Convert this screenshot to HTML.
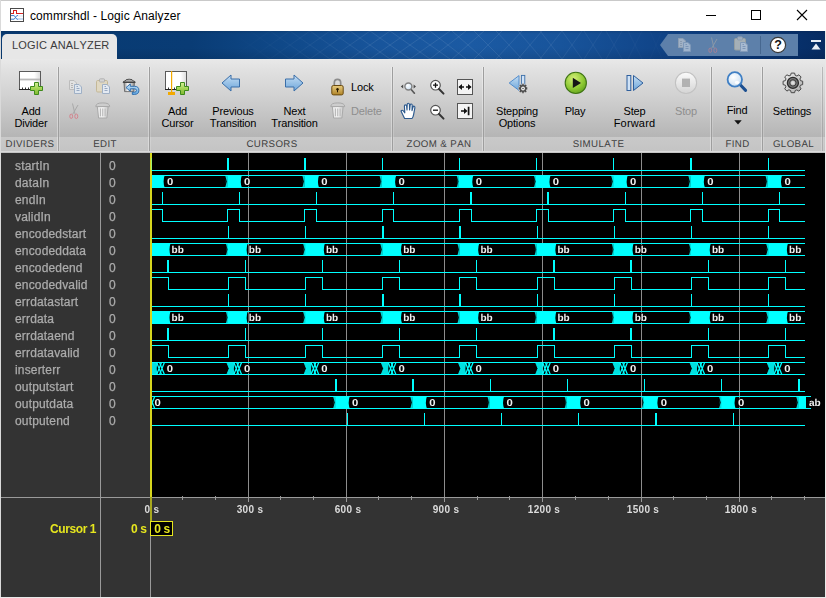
<!DOCTYPE html>
<html lang="en">
<head>
<meta charset="utf-8">
<title>commrshdl - Logic Analyzer</title>
<style>
html,body{margin:0;padding:0;}
body{width:826px;height:598px;overflow:hidden;background:#fff;position:relative;
  font-family:"Liberation Sans",sans-serif;font-size:11px;color:#000;font-kerning:none;}
.abs{position:absolute;}
#win{position:absolute;left:0;top:0;width:826px;height:598px;overflow:hidden;background:#fff;}
/* title bar */
#title{position:absolute;left:0;top:0;width:826px;height:31px;background:#fff;border-top:1px solid #c9c9c9;box-sizing:border-box;}
#title .txt{position:absolute;left:30px;top:7px;font-size:12px;line-height:16px;color:#000;white-space:nowrap;letter-spacing:0.1px;}
/* tab strip */
#strip{position:absolute;left:1px;top:31px;width:824px;height:28px;
  background:linear-gradient(to bottom,rgba(0,0,0,0.12) 0,rgba(0,0,0,0) 3px,rgba(0,0,0,0) 60%,rgba(0,0,0,0.10) 100%),linear-gradient(to right,#083a72 0px,#093c75 190px,#0f4888 280px,#18559c 380px,#1b5aa3 470px,#18549b 560px,#104488 660px,#0a387a 740px,#062c63 824px);}
#tab{position:absolute;left:2px;top:34px;width:115px;height:26px;background:#e7e7e7;border-radius:5px 5px 0 0;}
#tab span{position:absolute;left:10px;top:4px;font-size:11px;line-height:14px;color:#3b3b3b;white-space:nowrap;letter-spacing:0.15px;}
#qab{position:absolute;left:660px;top:34px;width:138px;height:22px;}
/* toolbar */
#tool{position:absolute;left:1px;top:59px;width:824px;height:93px;
  background:linear-gradient(to bottom,#e9e9e9 0px,#e0e0e0 12px,#d2d2d2 36px,#c0c0c0 62px,#b5b5b5 78px);}
#toolband{position:absolute;left:1px;top:137px;width:824px;height:14px;background:linear-gradient(to bottom,#c9c9c9,#c4c4c4);}
#toolbot{position:absolute;left:1px;top:151px;width:824px;height:2px;background:#c4c4c4;border-top:1px solid #dadada;box-sizing:border-box;}
.sep{position:absolute;top:67px;width:1px;height:84px;background:#9e9e9e;box-shadow:-1px 0 0 rgba(255,255,255,0.35),1px 0 0 rgba(255,255,255,0.18);}
.gl{position:absolute;top:139px;font-size:9.7px;line-height:12px;color:#404040;letter-spacing:0.4px;text-rendering:geometricPrecision;white-space:nowrap;text-align:center;}
.bl{position:absolute;font-size:11px;line-height:12px;color:#000;text-align:center;white-space:nowrap;letter-spacing:-0.18px;}
.bl.dis{color:#8e8e8e;}
/* panels */
#left{position:absolute;left:1px;top:153px;width:149px;height:444px;background:#333;}
#bottom{position:absolute;left:150px;top:497px;width:675px;height:100px;background:#333;}
#wavebg{position:absolute;left:150px;top:153px;width:675px;height:344px;background:#000;}
.vline{position:absolute;top:153px;width:1px;height:444px;background:#9a9a9a;}
#hline{position:absolute;left:1px;top:497px;width:824px;height:1px;background:#9a9a9a;}
.sn,.sv{position:absolute;font-size:12px;line-height:14px;color:#acacac;white-space:nowrap;letter-spacing:0.16px;will-change:transform;-webkit-text-stroke:0.25px #acacac;}
.sn{left:15px;}
.sv{left:109px;}
svg.wave{position:absolute;left:0;top:0;}
.wl{font-family:"Liberation Sans",sans-serif;font-weight:bold;font-size:10px;text-rendering:geometricPrecision;fill:#f0f0f0;stroke:#000;stroke-width:1.8px;paint-order:stroke fill;stroke-linejoin:round;}
.tl{position:absolute;top:504px;width:60px;text-align:center;font-size:10px;letter-spacing:0.3px;will-change:transform;font-weight:bold;line-height:12px;color:#dcdcdc;white-space:nowrap;}
.tk{position:absolute;width:1px;background:#9a9a9a;}
#c1{will-change:transform;position:absolute;left:50px;top:522px;letter-spacing:-0.4px;font-size:12px;font-weight:bold;line-height:14px;color:#e6e61e;white-space:nowrap;}
#c1v{will-change:transform;position:absolute;left:130.5px;top:522px;letter-spacing:-0.4px;font-size:12px;font-weight:bold;line-height:14px;color:#e6e61e;white-space:nowrap;}
#cbox{will-change:transform;position:absolute;left:150px;top:521px;width:23px;height:15px;box-sizing:border-box;border:1px solid #e6e61e;background:#000;
  font-size:12px;letter-spacing:-0.4px;font-weight:bold;line-height:14.5px;color:#e6e61e;text-align:center;white-space:nowrap;padding-left:1px;}
#edge-l{position:absolute;left:0;top:0;width:1px;height:598px;background:#dadada;}
#edge-r{position:absolute;left:825px;top:31px;width:1px;height:567px;background:#e8e8e8;}
#edge-b{position:absolute;left:0;top:597px;width:826px;height:1px;background:#e8e8e8;}
</style>
</head>
<body>
<div id="win">
  <div id="title">
    <svg class="abs" style="left:10px;top:7px" width="14" height="14" viewBox="0 0 14 14" shape-rendering="crispEdges">
      <rect x="0.5" y="0.5" width="13" height="13" fill="#fff" stroke="#4a4a4a"/>
      <path d="M1 5.5 H3.5 V2.5 H6.5 V5.5 H13" fill="none" stroke="#d62424" stroke-width="1"/>
      <g shape-rendering="auto"><path d="M1 7.6 H4.2 L6.8 11.2 H13 M1 11.2 H4.2 L6.8 7.6 H13" fill="none" stroke="#3c82d2" stroke-width="1"/>
      <path d="M8 7.6 H13 M8 11.2 H13" stroke="#e8f0fa" stroke-width="1.1"/></g>
    </svg>
    <div class="txt">commrshdl - Logic Analyzer</div>
    <svg class="abs" style="left:700px;top:3px" width="120" height="24" viewBox="0 0 120 24">
      <path d="M6 11.5 H16" stroke="#000" stroke-width="1" fill="none"/>
      <rect x="51.5" y="6.5" width="9" height="9" stroke="#000" stroke-width="1" fill="none"/>
      <path d="M97 6 L107 16 M107 6 L97 16" stroke="#000" stroke-width="1.1" fill="none"/>
    </svg>
  </div>
  <div id="strip"></div>
  <svg class="abs" style="left:230px;top:31px" width="480" height="28" viewBox="0 0 480 28">
    <defs><linearGradient id="mfade" x1="0" y1="0" x2="1" y2="0"><stop offset="0" stop-color="#fff" stop-opacity="0"/><stop offset="0.35" stop-color="#fff" stop-opacity="0.13"/><stop offset="0.7" stop-color="#fff" stop-opacity="0.11"/><stop offset="1" stop-color="#fff" stop-opacity="0"/></linearGradient></defs>
    <g fill="none" stroke="url(#mfade)" stroke-width="0.7">
      <path d="M0 28 L40 0 M20 28 L60 0 M40 28 L80 0 M60 28 L100 0 M80 28 L120 0 M100 28 L140 0 M120 28 L160 0 M140 28 L180 0 M160 28 L200 0 M180 28 L220 0 M200 28 L236 0 M222 28 L254 0 M244 28 L272 0 M266 28 L292 0 M288 28 L312 0 M310 28 L332 0 M332 28 L352 0 M354 28 L372 0 M376 28 L392 0 M398 28 L412 0 M420 28 L432 0 M442 28 L452 0"/>
      <path d="M0 0 L40 28 M20 0 L60 28 M40 0 L80 28 M60 0 L100 28 M80 0 L120 28 M100 0 L140 28 M120 0 L160 28 M140 0 L180 28 M160 0 L200 28 M180 0 L220 28 M200 0 L236 28 M222 0 L254 28 M244 0 L272 28 M266 0 L292 28 M288 0 L312 28 M310 0 L332 28 M332 0 L352 28 M354 0 L372 28 M376 0 L392 28 M398 0 L412 28 M420 0 L432 28 M442 0 L452 28"/>
    </g>
  </svg>
  <div id="tab"><span>LOGIC ANALYZER</span></div>
  <svg id="qab" viewBox="0 0 138 22">
    <path d="M0 11 L8 0 H138 V22 H8 Z" fill="#5d80aa"/>
  </svg>
  <svg class="abs" style="left:810px;top:39px" width="12" height="12" viewBox="0 0 12 12">
    <rect x="1" y="1" width="10" height="2" fill="#e8eef6"/>
    <path d="M1.5 10.5 L6 4.5 L10.5 10.5 Z" fill="#e8eef6"/>
  </svg>

  <div id="tool"></div>
  <div id="toolband"></div>
  <div id="toolbot"></div>
  <svg width="0" height="0" style="position:absolute">
    <defs>
      <linearGradient id="gplus" x1="0" y1="0" x2="0" y2="1"><stop offset="0" stop-color="#d6f09a"/><stop offset="0.5" stop-color="#a4d455"/><stop offset="1" stop-color="#7fb832"/></linearGradient>
      <linearGradient id="gbox" x1="0" y1="0" x2="1" y2="0"><stop offset="0" stop-color="#ffffff"/><stop offset="0.7" stop-color="#ffffff"/><stop offset="1" stop-color="#dcdcdc"/></linearGradient>
      <linearGradient id="garrow" x1="0" y1="0" x2="0" y2="1"><stop offset="0" stop-color="#c4def4"/><stop offset="1" stop-color="#6ea6da"/></linearGradient>
      <radialGradient id="gplay" cx="0.4" cy="0.3" r="0.8"><stop offset="0" stop-color="#d4f078"/><stop offset="0.6" stop-color="#8cc832"/><stop offset="1" stop-color="#5a9a1a"/></radialGradient>
      <linearGradient id="gstop" x1="0" y1="0" x2="0" y2="1"><stop offset="0" stop-color="#fbfbfb"/><stop offset="1" stop-color="#d4d4d4"/></linearGradient>
      <linearGradient id="glock" x1="0" y1="0" x2="0" y2="1"><stop offset="0" stop-color="#e8cc80"/><stop offset="1" stop-color="#b08428"/></linearGradient>
      <radialGradient id="glens" cx="0.4" cy="0.35" r="0.7"><stop offset="0" stop-color="#ffffff"/><stop offset="1" stop-color="#c8def2"/></radialGradient>
      <linearGradient id="gtrash" x1="0" y1="0" x2="1" y2="0"><stop offset="0" stop-color="#e6e6e6"/><stop offset="0.5" stop-color="#f4f4f4"/><stop offset="1" stop-color="#c8c8c8"/></linearGradient>
      </defs>
  </svg>
  <div class="sep" style="left:58px"></div>
  <div class="sep" style="left:149px"></div>
  <div class="sep" style="left:392px"></div>
  <div class="sep" style="left:483px"></div>
  <div class="sep" style="left:711px"></div>
  <div class="sep" style="left:762px"></div>
  <div class="sep" style="left:822px;opacity:0.6"></div>

  <div class="gl" style="left:0px;width:60px">DIVIDERS</div>
  <div class="gl" style="left:60px;width:90px">EDIT</div>
  <div class="gl" style="left:151px;width:242px">CURSORS</div>
  <div class="gl" style="left:394px;width:90px">ZOOM &amp; PAN</div>
  <div class="gl" style="left:485px;width:227px">SIMULATE</div>
  <div class="gl" style="left:713px;width:49px">FIND</div>
  <div class="gl" style="left:763px;width:61px">GLOBAL</div>

  <!-- Add Divider icon -->
  <svg class="abs" style="left:18px;top:70px" width="28" height="27" viewBox="0 0 28 27">
    <rect x="1.5" y="1.5" width="21" height="18" fill="url(#gbox)" stroke="#5a5a5a"/>
    <rect x="2" y="8.6" width="20" height="1.8" fill="#b9b9b9"/>
    <path d="M1 19.5 H23" stroke="#222" stroke-width="1"/>
    <path d="M4.5 17.5 V19 M7.5 17.5 V19 M10.5 17.5 V19" stroke="#333" stroke-width="1"/>
    <g transform="translate(12,12)"><path d="M4.5 0.5 H8.5 V4.5 H12.5 V8.5 H8.5 V12.5 H4.5 V8.5 H0.5 V4.5 H4.5 Z" fill="url(#gplus)" stroke="#3e8a1c" stroke-width="1" stroke-linejoin="round"/></g>
  </svg>
  <!-- Edit group -->
  <svg class="abs" style="left:69px;top:80px" width="14" height="15" viewBox="0 0 14 15"><g transform="translate(0,0)"><path d="M0.5 0.5 H5 L7.5 3 V9.5 H0.5 Z" fill="#e2e2e2" stroke="#bcbcbc"/>
        <path d="M2 3.5 H4 M2 5.5 H4 M2 7.5 H4" stroke="#b0b0b0" stroke-width="0.9"/>
        <path d="M5.5 4.5 H10 L12.5 7 V13.5 H5.5 Z" fill="#dfe6ee" stroke="#9fb0c6"/>
        <path d="M7.5 8.5 H10.5 M7.5 10.5 H10.5 M7.5 6.5 H9" stroke="#8ea2bc" stroke-width="0.9"/></g></svg>
  <svg class="abs" style="left:96px;top:78px" width="15" height="17" viewBox="0 0 15 17"><g transform="translate(0,0)"><rect x="0.5" y="2.5" width="11" height="11.5" rx="1.2" fill="#e0d8c2" stroke="#c4b898"/>
        <rect x="3.5" y="0.8" width="5" height="3.2" rx="0.8" fill="#d4d4d4" stroke="#aaaaaa" stroke-width="0.8"/>
        <path d="M6.5 6.5 H11 L13.5 9 V15.5 H6.5 Z" fill="#e4eaf2" stroke="#9fb0c6"/>
        <path d="M8.5 10.5 H11.5 M8.5 12.5 H11.5 M8.5 8.5 H10" stroke="#8ea2bc" stroke-width="0.9"/></g></svg>
  <svg class="abs" style="left:122px;top:78px" width="18" height="18" viewBox="0 0 18 18">
    <defs>
      <linearGradient id="gcan" x1="0" y1="0" x2="1" y2="0"><stop offset="0" stop-color="#8c8c8c"/><stop offset="0.35" stop-color="#f6f6f6"/><stop offset="0.75" stop-color="#c2c2c2"/><stop offset="1" stop-color="#8a8a8a"/></linearGradient>
      <linearGradient id="glid" x1="0" y1="0" x2="0" y2="1"><stop offset="0" stop-color="#d0d0d0"/><stop offset="1" stop-color="#6e6e6e"/></linearGradient>
      <linearGradient id="gundo" x1="0" y1="0" x2="0" y2="1"><stop offset="0" stop-color="#c6e4f8"/><stop offset="1" stop-color="#62a8e2"/></linearGradient>
    </defs>
    <path d="M2 4.5 L2.6 13.6 H11.8 L12.4 4.5 Z" fill="url(#gcan)" stroke="#5e5e5e" stroke-width="0.8"/>
    <path d="M1 4.4 Q1.1 3.2 3 3 Q3.4 1.2 7.1 1.2 Q10.9 1.2 11.3 3 Q13.2 3.2 13.3 4.4 Z" fill="url(#glid)" stroke="#2e2e2e" stroke-width="0.8" stroke-linejoin="round"/>
    <path d="M4 9.6 L8.3 5.9 V8.3 H12.5 Q16.9 8.3 16.9 12.3 Q16.9 16.4 12.5 16.4 H10.3 V14.2 H12.3 Q14.5 14.2 14.5 12.4 Q14.5 10.8 12.3 10.8 H8.3 V13.3 Z" fill="url(#gundo)" stroke="#2565a8" stroke-width="0.9" stroke-linejoin="round"/>
  </svg>
  <svg class="abs" style="left:69px;top:103px" width="11" height="17" viewBox="0 0 11 17"><g transform="translate(0,0)"><path d="M3.5 0.5 L6 11 M9 2 L3.6 11.4" stroke="#a8a8a8" stroke-width="1" fill="none"/>
        <ellipse cx="2.2" cy="13.3" rx="1.4" ry="2.2" fill="none" stroke="#d4808a" stroke-width="0.95"/>
        <ellipse cx="7.3" cy="13.3" rx="1.5" ry="2.3" fill="none" stroke="#d4808a" stroke-width="0.95"/></g></svg>
  <svg class="abs" style="left:95px;top:102px" width="16" height="17" viewBox="0 0 16 17"><g transform="translate(0,0)"><path d="M2.3 4.5 L3.6 16 H11.9 L13.2 4.5 Z" fill="url(#gtrash)" stroke="#a9a9a9"/>
        <path d="M0.8 4.6 Q0.6 0.9 7.75 0.9 Q14.9 0.9 14.7 4.6 Z" fill="#cdcdcd" stroke="#a6a6a6" stroke-width="0.9"/>
        <path d="M5.4 6.5 V14.3 M7.75 6.5 V14.3 M10.1 6.5 V14.3" stroke="#b2b2b2" stroke-width="1" fill="none"/></g></svg>

  <!-- Add Cursor icon -->
  <svg class="abs" style="left:164px;top:70px" width="28" height="27" viewBox="0 0 28 27">
    <rect x="1.5" y="1.5" width="21" height="18" fill="url(#gbox)" stroke="#5a5a5a"/>
    <path d="M1 19.5 H23" stroke="#222" stroke-width="1"/>
    <path d="M4.5 17.5 V19 M10.5 17.5 V19" stroke="#333" stroke-width="1"/>
    <rect x="7" y="1" width="1.2" height="22" fill="#f2a900"/>
    <rect x="4" y="22" width="7" height="3" fill="#f2a900"/>
    <g transform="translate(12,12)"><path d="M4.5 0.5 H8.5 V4.5 H12.5 V8.5 H8.5 V12.5 H4.5 V8.5 H0.5 V4.5 H4.5 Z" fill="url(#gplus)" stroke="#3e8a1c" stroke-width="1" stroke-linejoin="round"/></g>
  </svg>
  <!-- Previous / Next arrows -->
  <svg class="abs" style="left:221px;top:74px" width="20" height="18" viewBox="0 0 20 18">
    <path d="M1 9 L10 1 V5 H18.5 V13 H10 V17 Z" fill="url(#garrow)" stroke="#3a6ea8" stroke-width="1" stroke-linejoin="round"/>
  </svg>
  <svg class="abs" style="left:284px;top:74px" width="20" height="18" viewBox="0 0 20 18">
    <path d="M19 9 L10 1 V5 H1.5 V13 H10 V17 Z" fill="url(#garrow)" stroke="#3a6ea8" stroke-width="1" stroke-linejoin="round"/>
  </svg>
  <!-- Lock -->
  <svg class="abs" style="left:331px;top:78px" width="13" height="18" viewBox="0 0 13 18">
    <path d="M3.3 8 V5 Q3.3 1.4 6.5 1.4 Q9.7 1.4 9.7 5 V8" fill="none" stroke="#8c8c8c" stroke-width="1.7"/>
    <rect x="0.8" y="7.5" width="11.4" height="9.4" rx="1.6" fill="url(#glock)" stroke="#6a4a10" stroke-width="1"/>
    <circle cx="6.5" cy="11.3" r="1.2" fill="#2a1a00"/><rect x="6" y="11.5" width="1" height="2.8" fill="#2a1a00"/>
  </svg>
  <svg class="abs" style="left:329.5px;top:102px" width="16" height="17" viewBox="0 0 16 17"><g transform="translate(0,0)"><path d="M2.3 4.5 L3.6 16 H11.9 L13.2 4.5 Z" fill="url(#gtrash)" stroke="#a9a9a9"/>
        <path d="M0.8 4.6 Q0.6 0.9 7.75 0.9 Q14.9 0.9 14.7 4.6 Z" fill="#cdcdcd" stroke="#a6a6a6" stroke-width="0.9"/>
        <path d="M5.4 6.5 V14.3 M7.75 6.5 V14.3 M10.1 6.5 V14.3" stroke="#b2b2b2" stroke-width="1" fill="none"/></g></svg>

  <!-- Zoom & pan icons -->
  <svg class="abs" style="left:400px;top:79px" width="17" height="17" viewBox="0 0 17 17">
    <path d="M11 10.2 L14.4 14.2" stroke="#5a5a5a" stroke-width="1.7" stroke-linecap="round"/>
    <circle cx="8.4" cy="7.5" r="3.5" fill="url(#glens)" stroke="#808080" stroke-width="1.4"/>
    <path d="M0.8 7.5 L3.2 5.6 V9.4 Z M16 7.5 L13.6 5.6 V9.4 Z" fill="#4a4a4a"/>
  </svg>
  <svg class="abs" style="left:429px;top:79px" width="17" height="17" viewBox="0 0 17 17">
    <circle cx="6.5" cy="6.2" r="4.8" fill="#fff" stroke="#555" stroke-width="1.2"/>
    <path d="M10 10 L14.5 14.6" stroke="#333" stroke-width="2" stroke-linecap="round"/>
    <path d="M4 6.2 H9 M6.5 3.7 V8.7" stroke="#111" stroke-width="1.3"/>
  </svg>
  <svg class="abs" style="left:456px;top:78px" width="18" height="18" viewBox="0 0 18 18">
    <rect x="1.5" y="1.5" width="15" height="15" fill="#f4f4f4" stroke="#555"/>
    <path d="M3.5 9 H8 M10 9 H14.5" stroke="#111" stroke-width="1.7"/>
    <path d="M2.4 9 L6 6 V12 Z M15.6 9 L12 6 V12 Z" fill="#111"/>
  </svg>
  <svg class="abs" style="left:400px;top:102px" width="18" height="18" viewBox="0 0 18 18">
    <path d="M4.6 16.5 L1.2 9.6 Q0.8 8.2 2.2 8.2 Q3.2 8.2 4.2 10 L4.8 10.8 L4.4 4 Q4.4 2.8 5.4 2.8 Q6.4 2.8 6.6 4 L7 8 L7.2 2.4 Q7.3 1.2 8.3 1.2 Q9.3 1.2 9.4 2.4 L9.6 8 L10.2 3 Q10.4 1.9 11.3 2 Q12.2 2.1 12.2 3.2 L12 8.6 L13 5 Q13.4 4 14.2 4.2 Q15 4.5 14.9 5.6 L13.6 12.6 Q13.2 15 12 16.5 Z" fill="#fff" stroke="#2d5a8e" stroke-width="1.15" stroke-linejoin="round"/>
  </svg>
  <svg class="abs" style="left:429px;top:103.5px" width="17" height="17" viewBox="0 0 17 17">
    <circle cx="6.5" cy="6.2" r="4.8" fill="#fff" stroke="#555" stroke-width="1.2"/>
    <path d="M10 10 L14.5 14.6" stroke="#333" stroke-width="2" stroke-linecap="round"/>
    <path d="M4 6.2 H9" stroke="#111" stroke-width="1.3"/>
  </svg>
  <svg class="abs" style="left:456px;top:102px" width="18" height="18" viewBox="0 0 18 18">
    <rect x="1.5" y="1.5" width="15" height="15" fill="#f4f4f4" stroke="#555"/>
    <path d="M5 9 H9.5 M12.6 4.8 V13.2" stroke="#111" stroke-width="1.7"/>
    <path d="M11.6 9 L8 6 V12 Z" fill="#111"/>
  </svg>

  <!-- Stepping options -->
  <svg class="abs" style="left:508px;top:74px" width="22" height="21" viewBox="0 0 22 21">
    <path d="M1.2 9 L11 1.6 V16.4 Z" fill="url(#garrow)" stroke="#4a86c8" stroke-width="0.9" stroke-linejoin="round"/>
    <rect x="13.4" y="1.4" width="3.4" height="11" fill="#cfe2f6" stroke="#3a6ea8" stroke-width="0.9"/>
    <g transform="translate(15,14.6)">
      <path d="M-0.9 -5 H0.9 L1.2 -3.6 L2.6 -4.4 L3.9 -3.1 L3.1 -1.8 L4.6 -1.3 V0.9 L3.2 1.3 L3.9 2.8 L2.6 4.1 L1.3 3.3 L0.9 4.8 H-0.9 L-1.3 3.3 L-2.6 4.1 L-3.9 2.8 L-3.2 1.3 L-4.6 0.9 V-1.3 L-3.1 -1.8 L-3.9 -3.1 L-2.6 -4.4 L-1.2 -3.6 Z" fill="#4c4c4c" stroke="#e8e8e8" stroke-width="0.5"/>
      <circle cx="0" cy="-0.1" r="1.9" fill="#f2f2f2"/><circle cx="0" cy="-0.1" r="0.8" fill="#555"/>
    </g>
  </svg>
  <!-- Play -->
  <svg class="abs" style="left:564px;top:71px" width="24" height="24" viewBox="0 0 24 24">
    <circle cx="11.8" cy="11.9" r="10.6" fill="url(#gplay)" stroke="#3f7414" stroke-width="1.1"/>
    <path d="M8.8 6.8 L17 11.9 L8.8 17 Z" fill="#161616"/>
  </svg>
  <!-- Step Forward -->
  <svg class="abs" style="left:626px;top:74px" width="19" height="18" viewBox="0 0 19 18">
    <rect x="1" y="1.5" width="3.8" height="15" fill="#cfe2f6" stroke="#2f5f9c" stroke-width="1"/>
    <path d="M7.5 1.5 L17 9 L7.5 16.5 Z" fill="url(#garrow)" stroke="#2f5f9c" stroke-width="1" stroke-linejoin="round"/>
  </svg>
  <!-- Stop -->
  <svg class="abs" style="left:674px;top:71px" width="24" height="24" viewBox="0 0 24 24">
    <circle cx="12" cy="11.9" r="10.6" fill="url(#gstop)" stroke="#c2c2c2" stroke-width="1.1"/>
    <rect x="8" y="7.6" width="8" height="8.4" fill="#b2b2b2"/>
  </svg>
  <!-- Find -->
  <svg class="abs" style="left:725px;top:70px" width="24" height="24" viewBox="0 0 24 24">
    <path d="M14.5 14 L20.6 20.4" stroke="#1c4f90" stroke-width="3" stroke-linecap="round"/>
    <circle cx="9.8" cy="9.4" r="7.2" fill="url(#glens)" stroke="#3f7fc4" stroke-width="1.8"/>
    <ellipse cx="12" cy="12.4" rx="2.2" ry="1.6" fill="#ffffff" opacity="0.9"/>
  </svg>
  <!-- Settings -->
  <svg class="abs" style="left:781px;top:71px" width="24" height="24" viewBox="0 0 24 24">
    <defs><linearGradient id="ggear" x1="0" y1="0" x2="1" y2="1"><stop offset="0" stop-color="#f2f2f2"/><stop offset="0.5" stop-color="#cfcfcf"/><stop offset="1" stop-color="#a8a8a8"/></linearGradient></defs>
    <g transform="translate(11.9,11.9)">
      <path d="M-1.7 -9.8 H1.7 L2.3 -7.6 L4 -6.9 L6 -8.1 L8.2 -5.9 L7 -3.9 L7.6 -2.2 L9.8 -1.7 V1.7 L7.6 2.3 L6.9 4 L8.2 6 L5.9 8.2 L3.9 7 L2.3 7.6 L1.7 9.8 H-1.7 L-2.3 7.6 L-4 6.9 L-6 8.2 L-8.2 5.9 L-7 3.9 L-7.6 2.3 L-9.8 1.7 V-1.7 L-7.6 -2.2 L-6.9 -4 L-8.2 -6 L-5.9 -8.1 L-3.9 -7 L-2.3 -7.6 Z" fill="url(#ggear)" stroke="#474747" stroke-width="1" stroke-linejoin="round"/>
      <circle r="5.5" fill="#777" stroke="#2c2c2c" stroke-width="1.3"/>
      <circle r="3.2" fill="#a4a4a4" stroke="#3a3a3a" stroke-width="1"/>
      <circle r="1.9" fill="#dedede"/>
    </g>
  </svg>

  <div class="bl" style="left:1px;width:60px;top:105px">Add<br>Divider</div>
  <div class="bl" style="left:147.5px;width:60px;top:105px">Add<br>Cursor</div>
  <div class="bl" style="left:198px;width:70px;top:105px">Previous<br>Transition</div>
  <div class="bl" style="left:259.5px;width:70px;top:105px">Next<br>Transition</div>
  <div class="bl" style="left:351px;top:81px;text-align:left">Lock</div>
  <div class="bl dis" style="left:351px;top:105px;text-align:left">Delete</div>
  <div class="bl" style="left:482px;width:70px;top:105px">Stepping<br>Options</div>
  <div class="bl" style="left:545px;width:60px;top:105px">Play</div>
  <div class="bl" style="left:604.5px;width:60px;top:105px">Step<br><span style="letter-spacing:0.17px">Forward</span></div>
  <div class="bl dis" style="left:656px;width:60px;top:105px">Stop</div>
  <div class="bl" style="left:707px;width:60px;top:104px">Find</div>
  <div class="bl" style="left:762px;width:60px;top:105px">Settings</div>
  <svg class="abs" style="left:734px;top:120px" width="8" height="5" viewBox="0 0 8 5"><path d="M0.3 0.3 H7.7 L4 4.4 Z" fill="#111"/></svg>

  <!-- quick access icons -->
  <svg class="abs" style="left:678px;top:38px;opacity:0.5" width="14" height="15" viewBox="0 0 14 15"><g transform="translate(0,0)"><path d="M0.5 0.5 H5 L7.5 3 V9.5 H0.5 Z" fill="#e2e2e2" stroke="#bcbcbc"/>
        <path d="M2 3.5 H4 M2 5.5 H4 M2 7.5 H4" stroke="#b0b0b0" stroke-width="0.9"/>
        <path d="M5.5 4.5 H10 L12.5 7 V13.5 H5.5 Z" fill="#dfe6ee" stroke="#9fb0c6"/>
        <path d="M7.5 8.5 H10.5 M7.5 10.5 H10.5 M7.5 6.5 H9" stroke="#8ea2bc" stroke-width="0.9"/></g></svg>
  <svg class="abs" style="left:708px;top:37px;opacity:0.6" width="11" height="17" viewBox="0 0 11 17"><g transform="translate(0,0)"><path d="M3.5 0.5 L6 11 M9 2 L3.6 11.4" stroke="#a8a8a8" stroke-width="1" fill="none"/>
        <ellipse cx="2.2" cy="13.3" rx="1.4" ry="2.2" fill="none" stroke="#d4808a" stroke-width="0.95"/>
        <ellipse cx="7.3" cy="13.3" rx="1.5" ry="2.3" fill="none" stroke="#d4808a" stroke-width="0.95"/></g></svg>
  <svg class="abs" style="left:734px;top:36px;opacity:0.55" width="15" height="17" viewBox="0 0 15 17"><g transform="translate(0,0)"><rect x="0.5" y="2.5" width="11" height="11.5" rx="1.2" fill="#e0d8c2" stroke="#c4b898"/>
        <rect x="3.5" y="0.8" width="5" height="3.2" rx="0.8" fill="#d4d4d4" stroke="#aaaaaa" stroke-width="0.8"/>
        <path d="M6.5 6.5 H11 L13.5 9 V15.5 H6.5 Z" fill="#e4eaf2" stroke="#9fb0c6"/>
        <path d="M8.5 10.5 H11.5 M8.5 12.5 H11.5 M8.5 8.5 H10" stroke="#8ea2bc" stroke-width="0.9"/></g></svg>
  <div class="abs" style="left:760px;top:36px;width:1px;height:18px;background:#46678f"></div>
  <svg class="abs" style="left:769px;top:36px" width="18" height="18" viewBox="0 0 18 18">
    <circle cx="9" cy="9" r="7.6" fill="#fff" stroke="#3a3a3a" stroke-width="1.2"/>
    <text x="9" y="13.2" text-anchor="middle" font-family="Liberation Sans, sans-serif" font-weight="bold" font-size="12.5" fill="#111">?</text>
  </svg>


  <div id="left"></div>
  <div id="wavebg"></div>
  <div id="bottom"></div>
  <div id="hline"></div>
  <div class="vline" style="left:100px"></div>
  <div class="vline" style="left:150px"></div>
<div class="sn" style="top:159px">startIn</div><div class="sv" style="top:159px">0</div>
<div class="sn" style="top:176px">dataIn</div><div class="sv" style="top:176px">0</div>
<div class="sn" style="top:193px">endIn</div><div class="sv" style="top:193px">0</div>
<div class="sn" style="top:210px">validIn</div><div class="sv" style="top:210px">0</div>
<div class="sn" style="top:227px">encodedstart</div><div class="sv" style="top:227px">0</div>
<div class="sn" style="top:244px">encodeddata</div><div class="sv" style="top:244px">0</div>
<div class="sn" style="top:261px">encodedend</div><div class="sv" style="top:261px">0</div>
<div class="sn" style="top:278px">encodedvalid</div><div class="sv" style="top:278px">0</div>
<div class="sn" style="top:295px">errdatastart</div><div class="sv" style="top:295px">0</div>
<div class="sn" style="top:312px">errdata</div><div class="sv" style="top:312px">0</div>
<div class="sn" style="top:329px">errdataend</div><div class="sv" style="top:329px">0</div>
<div class="sn" style="top:346px">errdatavalid</div><div class="sv" style="top:346px">0</div>
<div class="sn" style="top:363px">inserterr</div><div class="sv" style="top:363px">0</div>
<div class="sn" style="top:380px">outputstart</div><div class="sv" style="top:380px">0</div>
<div class="sn" style="top:397px">outputdata</div><div class="sv" style="top:397px">0</div>
<div class="sn" style="top:414px">outputend</div><div class="sv" style="top:414px">0</div>
<div class="tl" style="left:122px">0 s</div>
<div class="tl" style="left:220px">300 s</div>
<div class="tl" style="left:318px">600 s</div>
<div class="tl" style="left:416px">900 s</div>
<div class="tl" style="left:514px">1200 s</div>
<div class="tl" style="left:613px">1500 s</div>
<div class="tl" style="left:711px">1800 s</div>
<div class="tk" style="left:182px;top:496px;height:4px"></div>
<div class="tk" style="left:215px;top:496px;height:4px"></div>
<div class="tk" style="left:248px;top:498px;height:4px"></div>
<div class="tk" style="left:280px;top:496px;height:4px"></div>
<div class="tk" style="left:313px;top:496px;height:4px"></div>
<div class="tk" style="left:346px;top:498px;height:4px"></div>
<div class="tk" style="left:378px;top:496px;height:4px"></div>
<div class="tk" style="left:411px;top:496px;height:4px"></div>
<div class="tk" style="left:444px;top:498px;height:4px"></div>
<div class="tk" style="left:477px;top:496px;height:4px"></div>
<div class="tk" style="left:509px;top:496px;height:4px"></div>
<div class="tk" style="left:542px;top:498px;height:4px"></div>
<div class="tk" style="left:575px;top:496px;height:4px"></div>
<div class="tk" style="left:608px;top:496px;height:4px"></div>
<div class="tk" style="left:641px;top:498px;height:4px"></div>
<div class="tk" style="left:673px;top:496px;height:4px"></div>
<div class="tk" style="left:706px;top:496px;height:4px"></div>
<div class="tk" style="left:739px;top:498px;height:4px"></div>
<div class="tk" style="left:771px;top:496px;height:4px"></div>
<div class="tk" style="left:804px;top:496px;height:4px"></div>
<svg class="wave" width="826" height="598" viewBox="0 0 826 598">
<defs><clipPath id="wc"><rect x="152" y="150" width="654" height="350"/></clipPath><clipPath id="wcb"><rect x="152" y="150" width="674" height="350"/></clipPath></defs>
<rect x="248" y="153" width="1" height="344" fill="#8c8c8c"/>
<rect x="346" y="153" width="1" height="344" fill="#8c8c8c"/>
<rect x="444" y="153" width="1" height="344" fill="#8c8c8c"/>
<rect x="542" y="153" width="1" height="344" fill="#8c8c8c"/>
<rect x="641" y="153" width="1" height="344" fill="#8c8c8c"/>
<rect x="739" y="153" width="1" height="344" fill="#8c8c8c"/>
<rect x="152" y="170" width="653" height="1" fill="#00ffff"/>
<rect x="227" y="158" width="2" height="12" fill="#00ffff"/>
<rect x="304" y="158" width="2" height="12" fill="#00ffff"/>
<rect x="382" y="158" width="1" height="12" fill="#00ffff"/>
<rect x="459" y="158" width="1" height="12" fill="#00ffff"/>
<rect x="536" y="158" width="1" height="12" fill="#00ffff"/>
<rect x="613" y="158" width="1" height="12" fill="#00ffff"/>
<rect x="690" y="158" width="2" height="12" fill="#00ffff"/>
<rect x="768" y="158" width="1" height="12" fill="#00ffff"/>
<rect x="152" y="175" width="653" height="1" fill="#00ffff"/>
<rect x="152" y="187" width="653" height="1" fill="#00ffff"/>
<g clip-path="url(#wc)">
<path d="M150.07 175 L164.75 175 Q162.45 181.5 164.75 188 L150.07 188 Z" fill="#00ffff"/>
<path d="M147.77 175 L150.17 175 L150.17 188 L147.77 188 L149.77 181.5 Z" fill="#00ffff" opacity="0.8"/>
<path d="M150.07 175.5 L148.77 181.5 L150.07 187.5" fill="none" stroke="#00ffff" stroke-width="0.6" opacity="0.4"/>
<path d="M227.25 175 L241.93 175 Q239.63 181.5 241.93 188 L227.25 188 Z" fill="#00ffff"/>
<path d="M224.95 175 L227.35 175 L227.35 188 L224.95 188 L226.95 181.5 Z" fill="#00ffff" opacity="0.8"/>
<path d="M227.25 175.5 L225.95 181.5 L227.25 187.5" fill="none" stroke="#00ffff" stroke-width="0.6" opacity="0.4"/>
<path d="M304.43 175 L319.11 175 Q316.81 181.5 319.11 188 L304.43 188 Z" fill="#00ffff"/>
<path d="M302.13 175 L304.53 175 L304.53 188 L302.13 188 L304.13 181.5 Z" fill="#00ffff" opacity="0.8"/>
<path d="M304.43 175.5 L303.13 181.5 L304.43 187.5" fill="none" stroke="#00ffff" stroke-width="0.6" opacity="0.4"/>
<path d="M381.61 175 L396.29 175 Q393.99 181.5 396.29 188 L381.61 188 Z" fill="#00ffff"/>
<path d="M379.31 175 L381.71 175 L381.71 188 L379.31 188 L381.31 181.5 Z" fill="#00ffff" opacity="0.8"/>
<path d="M381.61 175.5 L380.31 181.5 L381.61 187.5" fill="none" stroke="#00ffff" stroke-width="0.6" opacity="0.4"/>
<path d="M458.79 175 L473.46 175 Q471.16 181.5 473.46 188 L458.79 188 Z" fill="#00ffff"/>
<path d="M456.49 175 L458.89 175 L458.89 188 L456.49 188 L458.49 181.5 Z" fill="#00ffff" opacity="0.8"/>
<path d="M458.79 175.5 L457.49 181.5 L458.79 187.5" fill="none" stroke="#00ffff" stroke-width="0.6" opacity="0.4"/>
<path d="M535.97 175 L550.64 175 Q548.34 181.5 550.64 188 L535.97 188 Z" fill="#00ffff"/>
<path d="M533.67 175 L536.07 175 L536.07 188 L533.67 188 L535.67 181.5 Z" fill="#00ffff" opacity="0.8"/>
<path d="M535.97 175.5 L534.67 181.5 L535.97 187.5" fill="none" stroke="#00ffff" stroke-width="0.6" opacity="0.4"/>
<path d="M613.15 175 L627.82 175 Q625.52 181.5 627.82 188 L613.15 188 Z" fill="#00ffff"/>
<path d="M610.85 175 L613.25 175 L613.25 188 L610.85 188 L612.85 181.5 Z" fill="#00ffff" opacity="0.8"/>
<path d="M613.15 175.5 L611.85 181.5 L613.15 187.5" fill="none" stroke="#00ffff" stroke-width="0.6" opacity="0.4"/>
<path d="M690.33 175 L705.00 175 Q702.70 181.5 705.00 188 L690.33 188 Z" fill="#00ffff"/>
<path d="M688.03 175 L690.43 175 L690.43 188 L688.03 188 L690.03 181.5 Z" fill="#00ffff" opacity="0.8"/>
<path d="M690.33 175.5 L689.03 181.5 L690.33 187.5" fill="none" stroke="#00ffff" stroke-width="0.6" opacity="0.4"/>
<path d="M767.51 175 L782.18 175 Q779.88 181.5 782.18 188 L767.51 188 Z" fill="#00ffff"/>
<path d="M765.21 175 L767.61 175 L767.61 188 L765.21 188 L767.21 181.5 Z" fill="#00ffff" opacity="0.8"/>
<path d="M767.51 175.5 L766.21 181.5 L767.51 187.5" fill="none" stroke="#00ffff" stroke-width="0.6" opacity="0.4"/>
</g>
<text transform="translate(166.9,185.3) scale(1.13,1)" class="wl">0</text>
<text transform="translate(244.1,185.3) scale(1.13,1)" class="wl">0</text>
<text transform="translate(321.3,185.3) scale(1.13,1)" class="wl">0</text>
<text transform="translate(398.5,185.3) scale(1.13,1)" class="wl">0</text>
<text transform="translate(475.7,185.3) scale(1.13,1)" class="wl">0</text>
<text transform="translate(552.8,185.3) scale(1.13,1)" class="wl">0</text>
<text transform="translate(630.0,185.3) scale(1.13,1)" class="wl">0</text>
<text transform="translate(707.2,185.3) scale(1.13,1)" class="wl">0</text>
<text transform="translate(784.4,185.3) scale(1.13,1)" class="wl">0</text>
<rect x="152" y="204" width="653" height="1" fill="#00ffff"/>
<rect x="162" y="192" width="1" height="12" fill="#00ffff"/>
<rect x="239" y="192" width="1" height="12" fill="#00ffff"/>
<rect x="316" y="192" width="1" height="12" fill="#00ffff"/>
<rect x="393" y="192" width="1" height="12" fill="#00ffff"/>
<rect x="470" y="192" width="2" height="12" fill="#00ffff"/>
<rect x="547" y="192" width="2" height="12" fill="#00ffff"/>
<rect x="625" y="192" width="1" height="12" fill="#00ffff"/>
<rect x="702" y="192" width="1" height="12" fill="#00ffff"/>
<rect x="779" y="192" width="1" height="12" fill="#00ffff"/>
<rect x="152" y="209" width="11" height="1" fill="#00ffff"/>
<rect x="162" y="209" width="1" height="13" fill="#00ffff"/>
<rect x="162" y="221" width="66" height="1" fill="#00ffff"/>
<rect x="227" y="209" width="13" height="1" fill="#00ffff"/>
<rect x="227" y="209" width="1" height="13" fill="#00ffff"/>
<rect x="239" y="209" width="1" height="13" fill="#00ffff"/>
<rect x="239" y="221" width="66" height="1" fill="#00ffff"/>
<rect x="304" y="209" width="13" height="1" fill="#00ffff"/>
<rect x="304" y="209" width="1" height="13" fill="#00ffff"/>
<rect x="316" y="209" width="1" height="13" fill="#00ffff"/>
<rect x="316" y="221" width="67" height="1" fill="#00ffff"/>
<rect x="382" y="209" width="12" height="1" fill="#00ffff"/>
<rect x="382" y="209" width="1" height="13" fill="#00ffff"/>
<rect x="393" y="209" width="1" height="13" fill="#00ffff"/>
<rect x="393" y="221" width="67" height="1" fill="#00ffff"/>
<rect x="459" y="209" width="13" height="1" fill="#00ffff"/>
<rect x="459" y="209" width="1" height="13" fill="#00ffff"/>
<rect x="471" y="209" width="1" height="13" fill="#00ffff"/>
<rect x="471" y="221" width="66" height="1" fill="#00ffff"/>
<rect x="536" y="209" width="13" height="1" fill="#00ffff"/>
<rect x="536" y="209" width="1" height="13" fill="#00ffff"/>
<rect x="548" y="209" width="1" height="13" fill="#00ffff"/>
<rect x="548" y="221" width="66" height="1" fill="#00ffff"/>
<rect x="613" y="209" width="13" height="1" fill="#00ffff"/>
<rect x="613" y="209" width="1" height="13" fill="#00ffff"/>
<rect x="625" y="209" width="1" height="13" fill="#00ffff"/>
<rect x="625" y="221" width="66" height="1" fill="#00ffff"/>
<rect x="690" y="209" width="13" height="1" fill="#00ffff"/>
<rect x="690" y="209" width="1" height="13" fill="#00ffff"/>
<rect x="702" y="209" width="1" height="13" fill="#00ffff"/>
<rect x="702" y="221" width="67" height="1" fill="#00ffff"/>
<rect x="768" y="209" width="12" height="1" fill="#00ffff"/>
<rect x="768" y="209" width="1" height="13" fill="#00ffff"/>
<rect x="779" y="209" width="1" height="13" fill="#00ffff"/>
<rect x="779" y="221" width="26" height="1" fill="#00ffff"/>
<rect x="152" y="238" width="653" height="1" fill="#00ffff"/>
<rect x="228" y="226" width="1" height="12" fill="#00ffff"/>
<rect x="305" y="226" width="1" height="12" fill="#00ffff"/>
<rect x="382" y="226" width="2" height="12" fill="#00ffff"/>
<rect x="459" y="226" width="2" height="12" fill="#00ffff"/>
<rect x="537" y="226" width="1" height="12" fill="#00ffff"/>
<rect x="614" y="226" width="1" height="12" fill="#00ffff"/>
<rect x="691" y="226" width="1" height="12" fill="#00ffff"/>
<rect x="768" y="226" width="1" height="12" fill="#00ffff"/>
<rect x="152" y="243" width="653" height="1" fill="#00ffff"/>
<rect x="152" y="255" width="653" height="1" fill="#00ffff"/>
<g clip-path="url(#wc)">
<path d="M150.73 243 L170.63 243 Q168.33 249.5 170.63 256 L150.73 256 Z" fill="#00ffff"/>
<path d="M148.43 243 L150.83 243 L150.83 256 L148.43 256 L150.43 249.5 Z" fill="#00ffff" opacity="0.8"/>
<path d="M150.73 243.5 L149.43 249.5 L150.73 255.5" fill="none" stroke="#00ffff" stroke-width="0.6" opacity="0.4"/>
<path d="M227.91 243 L247.81 243 Q245.51 249.5 247.81 256 L227.91 256 Z" fill="#00ffff"/>
<path d="M225.61 243 L228.01 243 L228.01 256 L225.61 256 L227.61 249.5 Z" fill="#00ffff" opacity="0.8"/>
<path d="M227.91 243.5 L226.61 249.5 L227.91 255.5" fill="none" stroke="#00ffff" stroke-width="0.6" opacity="0.4"/>
<path d="M305.09 243 L324.99 243 Q322.69 249.5 324.99 256 L305.09 256 Z" fill="#00ffff"/>
<path d="M302.79 243 L305.19 243 L305.19 256 L302.79 256 L304.79 249.5 Z" fill="#00ffff" opacity="0.8"/>
<path d="M305.09 243.5 L303.79 249.5 L305.09 255.5" fill="none" stroke="#00ffff" stroke-width="0.6" opacity="0.4"/>
<path d="M382.27 243 L402.17 243 Q399.87 249.5 402.17 256 L382.27 256 Z" fill="#00ffff"/>
<path d="M379.97 243 L382.37 243 L382.37 256 L379.97 256 L381.97 249.5 Z" fill="#00ffff" opacity="0.8"/>
<path d="M382.27 243.5 L380.97 249.5 L382.27 255.5" fill="none" stroke="#00ffff" stroke-width="0.6" opacity="0.4"/>
<path d="M459.45 243 L479.35 243 Q477.05 249.5 479.35 256 L459.45 256 Z" fill="#00ffff"/>
<path d="M457.15 243 L459.55 243 L459.55 256 L457.15 256 L459.15 249.5 Z" fill="#00ffff" opacity="0.8"/>
<path d="M459.45 243.5 L458.15 249.5 L459.45 255.5" fill="none" stroke="#00ffff" stroke-width="0.6" opacity="0.4"/>
<path d="M536.62 243 L556.53 243 Q554.23 249.5 556.53 256 L536.62 256 Z" fill="#00ffff"/>
<path d="M534.32 243 L536.72 243 L536.72 256 L534.32 256 L536.32 249.5 Z" fill="#00ffff" opacity="0.8"/>
<path d="M536.62 243.5 L535.32 249.5 L536.62 255.5" fill="none" stroke="#00ffff" stroke-width="0.6" opacity="0.4"/>
<path d="M613.80 243 L633.71 243 Q631.41 249.5 633.71 256 L613.80 256 Z" fill="#00ffff"/>
<path d="M611.50 243 L613.90 243 L613.90 256 L611.50 256 L613.50 249.5 Z" fill="#00ffff" opacity="0.8"/>
<path d="M613.80 243.5 L612.50 249.5 L613.80 255.5" fill="none" stroke="#00ffff" stroke-width="0.6" opacity="0.4"/>
<path d="M690.98 243 L710.89 243 Q708.59 249.5 710.89 256 L690.98 256 Z" fill="#00ffff"/>
<path d="M688.68 243 L691.08 243 L691.08 256 L688.68 256 L690.68 249.5 Z" fill="#00ffff" opacity="0.8"/>
<path d="M690.98 243.5 L689.68 249.5 L690.98 255.5" fill="none" stroke="#00ffff" stroke-width="0.6" opacity="0.4"/>
<path d="M768.16 243 L788.07 243 Q785.77 249.5 788.07 256 L768.16 256 Z" fill="#00ffff"/>
<path d="M765.86 243 L768.26 243 L768.26 256 L765.86 256 L767.86 249.5 Z" fill="#00ffff" opacity="0.8"/>
<path d="M768.16 243.5 L766.86 249.5 L768.16 255.5" fill="none" stroke="#00ffff" stroke-width="0.6" opacity="0.4"/>
</g>
<text transform="translate(171.6,253.3) scale(1.0,1)" class="wl">bb</text>
<text transform="translate(248.8,253.3) scale(1.0,1)" class="wl">bb</text>
<text transform="translate(326.0,253.3) scale(1.0,1)" class="wl">bb</text>
<text transform="translate(403.2,253.3) scale(1.0,1)" class="wl">bb</text>
<text transform="translate(480.4,253.3) scale(1.0,1)" class="wl">bb</text>
<text transform="translate(557.5,253.3) scale(1.0,1)" class="wl">bb</text>
<text transform="translate(634.7,253.3) scale(1.0,1)" class="wl">bb</text>
<text transform="translate(711.9,253.3) scale(1.0,1)" class="wl">bb</text>
<text transform="translate(789.1,253.3) scale(1.0,1)" class="wl">bb</text>
<rect x="152" y="272" width="653" height="1" fill="#00ffff"/>
<rect x="167" y="260" width="2" height="12" fill="#00ffff"/>
<rect x="245" y="260" width="1" height="12" fill="#00ffff"/>
<rect x="322" y="260" width="1" height="12" fill="#00ffff"/>
<rect x="399" y="260" width="1" height="12" fill="#00ffff"/>
<rect x="476" y="260" width="1" height="12" fill="#00ffff"/>
<rect x="553" y="260" width="2" height="12" fill="#00ffff"/>
<rect x="630" y="260" width="2" height="12" fill="#00ffff"/>
<rect x="708" y="260" width="1" height="12" fill="#00ffff"/>
<rect x="785" y="260" width="1" height="12" fill="#00ffff"/>
<rect x="152" y="277" width="17" height="1" fill="#00ffff"/>
<rect x="168" y="277" width="1" height="13" fill="#00ffff"/>
<rect x="168" y="289" width="61" height="1" fill="#00ffff"/>
<rect x="228" y="277" width="18" height="1" fill="#00ffff"/>
<rect x="228" y="277" width="1" height="13" fill="#00ffff"/>
<rect x="245" y="277" width="1" height="13" fill="#00ffff"/>
<rect x="245" y="289" width="61" height="1" fill="#00ffff"/>
<rect x="305" y="277" width="18" height="1" fill="#00ffff"/>
<rect x="305" y="277" width="1" height="13" fill="#00ffff"/>
<rect x="322" y="277" width="1" height="13" fill="#00ffff"/>
<rect x="322" y="289" width="61" height="1" fill="#00ffff"/>
<rect x="382" y="277" width="18" height="1" fill="#00ffff"/>
<rect x="382" y="277" width="1" height="13" fill="#00ffff"/>
<rect x="399" y="277" width="1" height="13" fill="#00ffff"/>
<rect x="399" y="289" width="61" height="1" fill="#00ffff"/>
<rect x="459" y="277" width="18" height="1" fill="#00ffff"/>
<rect x="459" y="277" width="1" height="13" fill="#00ffff"/>
<rect x="476" y="277" width="1" height="13" fill="#00ffff"/>
<rect x="476" y="289" width="62" height="1" fill="#00ffff"/>
<rect x="537" y="277" width="18" height="1" fill="#00ffff"/>
<rect x="537" y="277" width="1" height="13" fill="#00ffff"/>
<rect x="554" y="277" width="1" height="13" fill="#00ffff"/>
<rect x="554" y="289" width="61" height="1" fill="#00ffff"/>
<rect x="614" y="277" width="18" height="1" fill="#00ffff"/>
<rect x="614" y="277" width="1" height="13" fill="#00ffff"/>
<rect x="631" y="277" width="1" height="13" fill="#00ffff"/>
<rect x="631" y="289" width="61" height="1" fill="#00ffff"/>
<rect x="691" y="277" width="18" height="1" fill="#00ffff"/>
<rect x="691" y="277" width="1" height="13" fill="#00ffff"/>
<rect x="708" y="277" width="1" height="13" fill="#00ffff"/>
<rect x="708" y="289" width="61" height="1" fill="#00ffff"/>
<rect x="768" y="277" width="18" height="1" fill="#00ffff"/>
<rect x="768" y="277" width="1" height="13" fill="#00ffff"/>
<rect x="785" y="277" width="1" height="13" fill="#00ffff"/>
<rect x="785" y="289" width="20" height="1" fill="#00ffff"/>
<rect x="152" y="306" width="653" height="1" fill="#00ffff"/>
<rect x="228" y="294" width="1" height="12" fill="#00ffff"/>
<rect x="305" y="294" width="1" height="12" fill="#00ffff"/>
<rect x="382" y="294" width="2" height="12" fill="#00ffff"/>
<rect x="459" y="294" width="2" height="12" fill="#00ffff"/>
<rect x="537" y="294" width="1" height="12" fill="#00ffff"/>
<rect x="614" y="294" width="1" height="12" fill="#00ffff"/>
<rect x="691" y="294" width="1" height="12" fill="#00ffff"/>
<rect x="768" y="294" width="1" height="12" fill="#00ffff"/>
<rect x="152" y="311" width="653" height="1" fill="#00ffff"/>
<rect x="152" y="323" width="653" height="1" fill="#00ffff"/>
<g clip-path="url(#wc)">
<path d="M150.73 311 L170.63 311 Q168.33 317.5 170.63 324 L150.73 324 Z" fill="#00ffff"/>
<path d="M148.43 311 L150.83 311 L150.83 324 L148.43 324 L150.43 317.5 Z" fill="#00ffff" opacity="0.8"/>
<path d="M150.73 311.5 L149.43 317.5 L150.73 323.5" fill="none" stroke="#00ffff" stroke-width="0.6" opacity="0.4"/>
<path d="M227.91 311 L247.81 311 Q245.51 317.5 247.81 324 L227.91 324 Z" fill="#00ffff"/>
<path d="M225.61 311 L228.01 311 L228.01 324 L225.61 324 L227.61 317.5 Z" fill="#00ffff" opacity="0.8"/>
<path d="M227.91 311.5 L226.61 317.5 L227.91 323.5" fill="none" stroke="#00ffff" stroke-width="0.6" opacity="0.4"/>
<path d="M305.09 311 L324.99 311 Q322.69 317.5 324.99 324 L305.09 324 Z" fill="#00ffff"/>
<path d="M302.79 311 L305.19 311 L305.19 324 L302.79 324 L304.79 317.5 Z" fill="#00ffff" opacity="0.8"/>
<path d="M305.09 311.5 L303.79 317.5 L305.09 323.5" fill="none" stroke="#00ffff" stroke-width="0.6" opacity="0.4"/>
<path d="M382.27 311 L402.17 311 Q399.87 317.5 402.17 324 L382.27 324 Z" fill="#00ffff"/>
<path d="M379.97 311 L382.37 311 L382.37 324 L379.97 324 L381.97 317.5 Z" fill="#00ffff" opacity="0.8"/>
<path d="M382.27 311.5 L380.97 317.5 L382.27 323.5" fill="none" stroke="#00ffff" stroke-width="0.6" opacity="0.4"/>
<path d="M459.45 311 L479.35 311 Q477.05 317.5 479.35 324 L459.45 324 Z" fill="#00ffff"/>
<path d="M457.15 311 L459.55 311 L459.55 324 L457.15 324 L459.15 317.5 Z" fill="#00ffff" opacity="0.8"/>
<path d="M459.45 311.5 L458.15 317.5 L459.45 323.5" fill="none" stroke="#00ffff" stroke-width="0.6" opacity="0.4"/>
<path d="M536.62 311 L556.53 311 Q554.23 317.5 556.53 324 L536.62 324 Z" fill="#00ffff"/>
<path d="M534.32 311 L536.72 311 L536.72 324 L534.32 324 L536.32 317.5 Z" fill="#00ffff" opacity="0.8"/>
<path d="M536.62 311.5 L535.32 317.5 L536.62 323.5" fill="none" stroke="#00ffff" stroke-width="0.6" opacity="0.4"/>
<path d="M613.80 311 L633.71 311 Q631.41 317.5 633.71 324 L613.80 324 Z" fill="#00ffff"/>
<path d="M611.50 311 L613.90 311 L613.90 324 L611.50 324 L613.50 317.5 Z" fill="#00ffff" opacity="0.8"/>
<path d="M613.80 311.5 L612.50 317.5 L613.80 323.5" fill="none" stroke="#00ffff" stroke-width="0.6" opacity="0.4"/>
<path d="M690.98 311 L710.89 311 Q708.59 317.5 710.89 324 L690.98 324 Z" fill="#00ffff"/>
<path d="M688.68 311 L691.08 311 L691.08 324 L688.68 324 L690.68 317.5 Z" fill="#00ffff" opacity="0.8"/>
<path d="M690.98 311.5 L689.68 317.5 L690.98 323.5" fill="none" stroke="#00ffff" stroke-width="0.6" opacity="0.4"/>
<path d="M768.16 311 L788.07 311 Q785.77 317.5 788.07 324 L768.16 324 Z" fill="#00ffff"/>
<path d="M765.86 311 L768.26 311 L768.26 324 L765.86 324 L767.86 317.5 Z" fill="#00ffff" opacity="0.8"/>
<path d="M768.16 311.5 L766.86 317.5 L768.16 323.5" fill="none" stroke="#00ffff" stroke-width="0.6" opacity="0.4"/>
</g>
<text transform="translate(171.6,321.3) scale(1.0,1)" class="wl">bb</text>
<text transform="translate(248.8,321.3) scale(1.0,1)" class="wl">bb</text>
<text transform="translate(326.0,321.3) scale(1.0,1)" class="wl">bb</text>
<text transform="translate(403.2,321.3) scale(1.0,1)" class="wl">bb</text>
<text transform="translate(480.4,321.3) scale(1.0,1)" class="wl">bb</text>
<text transform="translate(557.5,321.3) scale(1.0,1)" class="wl">bb</text>
<text transform="translate(634.7,321.3) scale(1.0,1)" class="wl">bb</text>
<text transform="translate(711.9,321.3) scale(1.0,1)" class="wl">bb</text>
<text transform="translate(789.1,321.3) scale(1.0,1)" class="wl">bb</text>
<rect x="152" y="340" width="653" height="1" fill="#00ffff"/>
<rect x="167" y="328" width="2" height="12" fill="#00ffff"/>
<rect x="245" y="328" width="1" height="12" fill="#00ffff"/>
<rect x="322" y="328" width="1" height="12" fill="#00ffff"/>
<rect x="399" y="328" width="1" height="12" fill="#00ffff"/>
<rect x="476" y="328" width="1" height="12" fill="#00ffff"/>
<rect x="553" y="328" width="2" height="12" fill="#00ffff"/>
<rect x="630" y="328" width="2" height="12" fill="#00ffff"/>
<rect x="708" y="328" width="1" height="12" fill="#00ffff"/>
<rect x="785" y="328" width="1" height="12" fill="#00ffff"/>
<rect x="152" y="345" width="17" height="1" fill="#00ffff"/>
<rect x="168" y="345" width="1" height="13" fill="#00ffff"/>
<rect x="168" y="357" width="61" height="1" fill="#00ffff"/>
<rect x="228" y="345" width="18" height="1" fill="#00ffff"/>
<rect x="228" y="345" width="1" height="13" fill="#00ffff"/>
<rect x="245" y="345" width="1" height="13" fill="#00ffff"/>
<rect x="245" y="357" width="61" height="1" fill="#00ffff"/>
<rect x="305" y="345" width="18" height="1" fill="#00ffff"/>
<rect x="305" y="345" width="1" height="13" fill="#00ffff"/>
<rect x="322" y="345" width="1" height="13" fill="#00ffff"/>
<rect x="322" y="357" width="61" height="1" fill="#00ffff"/>
<rect x="382" y="345" width="18" height="1" fill="#00ffff"/>
<rect x="382" y="345" width="1" height="13" fill="#00ffff"/>
<rect x="399" y="345" width="1" height="13" fill="#00ffff"/>
<rect x="399" y="357" width="61" height="1" fill="#00ffff"/>
<rect x="459" y="345" width="18" height="1" fill="#00ffff"/>
<rect x="459" y="345" width="1" height="13" fill="#00ffff"/>
<rect x="476" y="345" width="1" height="13" fill="#00ffff"/>
<rect x="476" y="357" width="62" height="1" fill="#00ffff"/>
<rect x="537" y="345" width="18" height="1" fill="#00ffff"/>
<rect x="537" y="345" width="1" height="13" fill="#00ffff"/>
<rect x="554" y="345" width="1" height="13" fill="#00ffff"/>
<rect x="554" y="357" width="61" height="1" fill="#00ffff"/>
<rect x="614" y="345" width="18" height="1" fill="#00ffff"/>
<rect x="614" y="345" width="1" height="13" fill="#00ffff"/>
<rect x="631" y="345" width="1" height="13" fill="#00ffff"/>
<rect x="631" y="357" width="61" height="1" fill="#00ffff"/>
<rect x="691" y="345" width="18" height="1" fill="#00ffff"/>
<rect x="691" y="345" width="1" height="13" fill="#00ffff"/>
<rect x="708" y="345" width="1" height="13" fill="#00ffff"/>
<rect x="708" y="357" width="61" height="1" fill="#00ffff"/>
<rect x="768" y="345" width="18" height="1" fill="#00ffff"/>
<rect x="768" y="345" width="1" height="13" fill="#00ffff"/>
<rect x="785" y="345" width="1" height="13" fill="#00ffff"/>
<rect x="785" y="357" width="20" height="1" fill="#00ffff"/>
<rect x="152" y="362" width="653" height="1" fill="#00ffff"/>
<rect x="152" y="374" width="653" height="1" fill="#00ffff"/>
<g clip-path="url(#wc)">
<path d="M144.17 362 L157.88 362 Q155.57 368.5 157.88 375 L144.17 375 L146.57 368.5 Z" fill="#00ffff" opacity="0.88"/>
<path d="M144.17 362.5 L146.57 368.5 L144.17 374.5" fill="none" stroke="#00ffff" stroke-width="0.8"/>
<path d="M156.67 362.5 L161.47 374.5 M156.67 374.5 L161.47 362.5" fill="none" stroke="#00ffff" stroke-width="1.25"/>
<path d="M159.57 362.5 L164.38 374.5 M159.57 374.5 L164.38 362.5" fill="none" stroke="#00ffff" stroke-width="1.25"/>
<path d="M226.85 362 L235.05 362 Q232.75 368.5 235.05 375 L226.85 375 L229.25 368.5 Z" fill="#00ffff" opacity="0.88"/>
<path d="M226.85 362.5 L229.25 368.5 L226.85 374.5" fill="none" stroke="#00ffff" stroke-width="0.8"/>
<path d="M233.85 362.5 L238.65 374.5 M233.85 374.5 L238.65 362.5" fill="none" stroke="#00ffff" stroke-width="1.25"/>
<path d="M236.75 362.5 L241.55 374.5 M236.75 374.5 L241.55 362.5" fill="none" stroke="#00ffff" stroke-width="1.25"/>
<path d="M304.03 362 L312.23 362 Q309.93 368.5 312.23 375 L304.03 375 L306.43 368.5 Z" fill="#00ffff" opacity="0.88"/>
<path d="M304.03 362.5 L306.43 368.5 L304.03 374.5" fill="none" stroke="#00ffff" stroke-width="0.8"/>
<path d="M311.03 362.5 L315.83 374.5 M311.03 374.5 L315.83 362.5" fill="none" stroke="#00ffff" stroke-width="1.25"/>
<path d="M313.93 362.5 L318.73 374.5 M313.93 374.5 L318.73 362.5" fill="none" stroke="#00ffff" stroke-width="1.25"/>
<path d="M381.21 362 L389.41 362 Q387.11 368.5 389.41 375 L381.21 375 L383.61 368.5 Z" fill="#00ffff" opacity="0.88"/>
<path d="M381.21 362.5 L383.61 368.5 L381.21 374.5" fill="none" stroke="#00ffff" stroke-width="0.8"/>
<path d="M388.21 362.5 L393.01 374.5 M388.21 374.5 L393.01 362.5" fill="none" stroke="#00ffff" stroke-width="1.25"/>
<path d="M391.11 362.5 L395.91 374.5 M391.11 374.5 L395.91 362.5" fill="none" stroke="#00ffff" stroke-width="1.25"/>
<path d="M458.39 362 L466.59 362 Q464.29 368.5 466.59 375 L458.39 375 L460.79 368.5 Z" fill="#00ffff" opacity="0.88"/>
<path d="M458.39 362.5 L460.79 368.5 L458.39 374.5" fill="none" stroke="#00ffff" stroke-width="0.8"/>
<path d="M465.39 362.5 L470.19 374.5 M465.39 374.5 L470.19 362.5" fill="none" stroke="#00ffff" stroke-width="1.25"/>
<path d="M468.29 362.5 L473.09 374.5 M468.29 374.5 L473.09 362.5" fill="none" stroke="#00ffff" stroke-width="1.25"/>
<path d="M535.57 362 L543.77 362 Q541.47 368.5 543.77 375 L535.57 375 L537.97 368.5 Z" fill="#00ffff" opacity="0.88"/>
<path d="M535.57 362.5 L537.97 368.5 L535.57 374.5" fill="none" stroke="#00ffff" stroke-width="0.8"/>
<path d="M542.57 362.5 L547.37 374.5 M542.57 374.5 L547.37 362.5" fill="none" stroke="#00ffff" stroke-width="1.25"/>
<path d="M545.47 362.5 L550.27 374.5 M545.47 374.5 L550.27 362.5" fill="none" stroke="#00ffff" stroke-width="1.25"/>
<path d="M612.75 362 L620.95 362 Q618.65 368.5 620.95 375 L612.75 375 L615.15 368.5 Z" fill="#00ffff" opacity="0.88"/>
<path d="M612.75 362.5 L615.15 368.5 L612.75 374.5" fill="none" stroke="#00ffff" stroke-width="0.8"/>
<path d="M619.75 362.5 L624.55 374.5 M619.75 374.5 L624.55 362.5" fill="none" stroke="#00ffff" stroke-width="1.25"/>
<path d="M622.65 362.5 L627.45 374.5 M622.65 374.5 L627.45 362.5" fill="none" stroke="#00ffff" stroke-width="1.25"/>
<path d="M689.93 362 L698.13 362 Q695.83 368.5 698.13 375 L689.93 375 L692.33 368.5 Z" fill="#00ffff" opacity="0.88"/>
<path d="M689.93 362.5 L692.33 368.5 L689.93 374.5" fill="none" stroke="#00ffff" stroke-width="0.8"/>
<path d="M696.93 362.5 L701.73 374.5 M696.93 374.5 L701.73 362.5" fill="none" stroke="#00ffff" stroke-width="1.25"/>
<path d="M699.83 362.5 L704.63 374.5 M699.83 374.5 L704.63 362.5" fill="none" stroke="#00ffff" stroke-width="1.25"/>
<path d="M767.11 362 L775.31 362 Q773.01 368.5 775.31 375 L767.11 375 L769.51 368.5 Z" fill="#00ffff" opacity="0.88"/>
<path d="M767.11 362.5 L769.51 368.5 L767.11 374.5" fill="none" stroke="#00ffff" stroke-width="0.8"/>
<path d="M774.11 362.5 L778.91 374.5 M774.11 374.5 L778.91 362.5" fill="none" stroke="#00ffff" stroke-width="1.25"/>
<path d="M777.01 362.5 L781.81 374.5 M777.01 374.5 L781.81 362.5" fill="none" stroke="#00ffff" stroke-width="1.25"/>
</g>
<text transform="translate(166.8,372.3) scale(1.13,1)" class="wl">0</text>
<text transform="translate(244.0,372.3) scale(1.13,1)" class="wl">0</text>
<text transform="translate(321.2,372.3) scale(1.13,1)" class="wl">0</text>
<text transform="translate(398.4,372.3) scale(1.13,1)" class="wl">0</text>
<text transform="translate(475.6,372.3) scale(1.13,1)" class="wl">0</text>
<text transform="translate(552.7,372.3) scale(1.13,1)" class="wl">0</text>
<text transform="translate(629.9,372.3) scale(1.13,1)" class="wl">0</text>
<text transform="translate(707.1,372.3) scale(1.13,1)" class="wl">0</text>
<text transform="translate(784.3,372.3) scale(1.13,1)" class="wl">0</text>
<rect x="152" y="391" width="653" height="1" fill="#00ffff"/>
<rect x="335" y="379" width="2" height="12" fill="#00ffff"/>
<rect x="412" y="379" width="2" height="12" fill="#00ffff"/>
<rect x="490" y="379" width="1" height="12" fill="#00ffff"/>
<rect x="567" y="379" width="1" height="12" fill="#00ffff"/>
<rect x="644" y="379" width="1" height="12" fill="#00ffff"/>
<rect x="721" y="379" width="1" height="12" fill="#00ffff"/>
<rect x="798" y="379" width="2" height="12" fill="#00ffff"/>
<rect x="152" y="396" width="659" height="1" fill="#00ffff"/>
<rect x="152" y="408" width="659" height="1" fill="#00ffff"/>
<g clip-path="url(#wc)">
<path d="M149.90 396.5 L154.70 408.5 M149.90 408.5 L154.70 396.5" fill="none" stroke="#00ffff" stroke-width="1.25"/>
<path d="M335.17 396 L349.85 396 Q347.55 402.5 349.85 409 L335.17 409 Z" fill="#00ffff"/>
<path d="M332.87 396 L335.27 396 L335.27 409 L332.87 409 L334.87 402.5 Z" fill="#00ffff" opacity="0.8"/>
<path d="M335.17 396.5 L333.87 402.5 L335.17 408.5" fill="none" stroke="#00ffff" stroke-width="0.6" opacity="0.4"/>
<path d="M412.35 396 L427.03 396 Q424.73 402.5 427.03 409 L412.35 409 Z" fill="#00ffff"/>
<path d="M410.05 396 L412.45 396 L412.45 409 L410.05 409 L412.05 402.5 Z" fill="#00ffff" opacity="0.8"/>
<path d="M412.35 396.5 L411.05 402.5 L412.35 408.5" fill="none" stroke="#00ffff" stroke-width="0.6" opacity="0.4"/>
<path d="M489.53 396 L504.21 396 Q501.91 402.5 504.21 409 L489.53 409 Z" fill="#00ffff"/>
<path d="M487.23 396 L489.63 396 L489.63 409 L487.23 409 L489.23 402.5 Z" fill="#00ffff" opacity="0.8"/>
<path d="M489.53 396.5 L488.23 402.5 L489.53 408.5" fill="none" stroke="#00ffff" stroke-width="0.6" opacity="0.4"/>
<path d="M566.71 396 L581.38 396 Q579.08 402.5 581.38 409 L566.71 409 Z" fill="#00ffff"/>
<path d="M564.41 396 L566.81 396 L566.81 409 L564.41 409 L566.41 402.5 Z" fill="#00ffff" opacity="0.8"/>
<path d="M566.71 396.5 L565.41 402.5 L566.71 408.5" fill="none" stroke="#00ffff" stroke-width="0.6" opacity="0.4"/>
<path d="M643.89 396 L658.56 396 Q656.26 402.5 658.56 409 L643.89 409 Z" fill="#00ffff"/>
<path d="M641.59 396 L643.99 396 L643.99 409 L641.59 409 L643.59 402.5 Z" fill="#00ffff" opacity="0.8"/>
<path d="M643.89 396.5 L642.59 402.5 L643.89 408.5" fill="none" stroke="#00ffff" stroke-width="0.6" opacity="0.4"/>
<path d="M721.07 396 L735.74 396 Q733.44 402.5 735.74 409 L721.07 409 Z" fill="#00ffff"/>
<path d="M718.77 396 L721.17 396 L721.17 409 L718.77 409 L720.77 402.5 Z" fill="#00ffff" opacity="0.8"/>
<path d="M721.07 396.5 L719.77 402.5 L721.07 408.5" fill="none" stroke="#00ffff" stroke-width="0.6" opacity="0.4"/>
<path d="M798.25 396 L812.92 396 Q810.62 402.5 812.92 409 L798.25 409 Z" fill="#00ffff"/>
<path d="M795.95 396 L798.35 396 L798.35 409 L795.95 409 L797.95 402.5 Z" fill="#00ffff" opacity="0.8"/>
<path d="M798.25 396.5 L796.95 402.5 L798.25 408.5" fill="none" stroke="#00ffff" stroke-width="0.6" opacity="0.4"/>
</g>
<text transform="translate(154.6,406.3) scale(1.13,1)" class="wl">0</text>
<text transform="translate(352.0,406.3) scale(1.13,1)" class="wl">0</text>
<text transform="translate(429.2,406.3) scale(1.13,1)" class="wl">0</text>
<text transform="translate(506.4,406.3) scale(1.13,1)" class="wl">0</text>
<text transform="translate(583.6,406.3) scale(1.13,1)" class="wl">0</text>
<text transform="translate(660.8,406.3) scale(1.13,1)" class="wl">0</text>
<text transform="translate(737.9,406.3) scale(1.13,1)" class="wl">0</text>
<text transform="translate(809.0,406.3) scale(1.0,1)" class="wl">ab</text>
<rect x="152" y="425" width="653" height="1" fill="#00ffff"/>
<rect x="347" y="413" width="1" height="12" fill="#00ffff"/>
<rect x="424" y="413" width="1" height="12" fill="#00ffff"/>
<rect x="501" y="413" width="1" height="12" fill="#00ffff"/>
<rect x="578" y="413" width="1" height="12" fill="#00ffff"/>
<rect x="655" y="413" width="2" height="12" fill="#00ffff"/>
<rect x="733" y="413" width="1" height="12" fill="#00ffff"/>
<rect x="150" y="153" width="2" height="344" fill="#d6d61e"/>
<rect x="150" y="497" width="2" height="24" fill="#a8a81e"/>
<rect x="151" y="158" width="1" height="13" fill="#a0f070"/>
</svg>
  <div id="c1">Cursor 1</div>
  <div id="c1v">0 s</div>
  <div id="cbox">0 s</div>
  <div id="edge-l"></div>
  <div id="edge-r"></div>
  <div id="edge-b"></div>
</div>
</body>
</html>
